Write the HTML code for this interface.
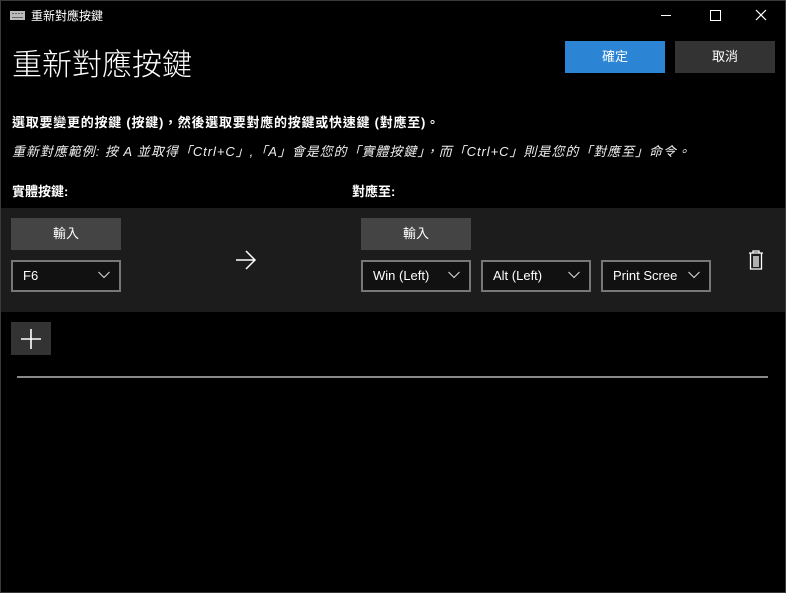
<!DOCTYPE html>
<html><head><meta charset="utf-8"><style>
body{margin:0;width:786px;height:593px;background:#000;color:#fff;font-family:"Liberation Sans","Noto Sans CJK TC",sans-serif;position:relative;overflow:hidden}
.a{position:absolute}
.frame{position:absolute;left:0;top:0;width:784px;height:591px;border:1px solid #3a3a3a}
.btn{position:absolute;background:#444;color:#fff;font-size:13px;text-align:center;line-height:32px;width:110px;height:32px}
.dd{position:absolute;width:106px;height:28px;border:2px solid #777;background:#111;font-size:13px;line-height:28px;box-sizing:content-box}
.dd span{position:absolute;left:10px}
.dd svg{position:absolute;right:9px;top:9px}
</style></head><body>
<div class="frame"></div>
<svg class="a" style="left:10px;top:11px" width="15" height="9"><rect x="0" y="0" width="15" height="9" fill="#bbb"/><g fill="#666"><rect x="2" y="2" width="2" height="1"/><rect x="5" y="2" width="2" height="1"/><rect x="8" y="2" width="2" height="1"/><rect x="11" y="2" width="2" height="1"/><rect x="2" y="6" width="11" height="1"/></g></svg>
<div class="a" style="left:31px;top:7px;font-size:12px">重新對應按鍵</div>
<div class="a" style="left:661px;top:15px;width:10px;height:1px;background:#fff"></div>
<div class="a" style="left:710px;top:10px;width:9px;height:9px;border:1px solid #fff"></div>
<svg class="a" style="left:755px;top:9px" width="12" height="12"><path d="M1 1L11 11M11 1L1 11" stroke="#fff" stroke-width="1.2"/></svg>
<div class="a" style="left:12px;top:40px;font-size:30px;font-weight:300">重新對應按鍵</div>
<div class="btn" style="left:565px;top:41px;width:100px;background:#2b84d4">確定</div>
<div class="btn" style="left:675px;top:41px;width:100px;background:#333">取消</div>
<div class="a" style="left:12px;top:112px;font-size:13px;font-weight:bold;letter-spacing:0.75px">選取要變更的按鍵 (按鍵)，然後選取要對應的按鍵或快速鍵 (對應至)。</div>
<div class="a" style="left:12px;top:141px;font-size:13px;font-style:italic;color:#eee;letter-spacing:0.95px">重新對應範例: 按 A 並取得「Ctrl+C」,「A」會是您的「實體按鍵」，而「Ctrl+C」則是您的「對應至」命令。</div>
<div class="a" style="left:12px;top:181px;font-size:13px;font-weight:bold">實體按鍵:</div>
<div class="a" style="left:352px;top:181px;font-size:13px;font-weight:bold">對應至:</div>
<div class="a" style="left:1px;top:208px;width:784px;height:104px;background:#1c1c1c"></div>
<div class="btn" style="left:11px;top:218px">輸入</div>
<div class="btn" style="left:361px;top:218px">輸入</div>
<div class="dd" style="left:11px;top:260px"><span>F6</span><svg width="12" height="8"><path d="M0.5 1L6 6.5L11.5 1" stroke="#ddd" fill="none"/></svg></div>
<div class="dd" style="left:361px;top:260px"><span>Win (Left)</span><svg width="12" height="8"><path d="M0.5 1L6 6.5L11.5 1" stroke="#ddd" fill="none"/></svg></div>
<div class="dd" style="left:481px;top:260px"><span>Alt (Left)</span><svg width="12" height="8"><path d="M0.5 1L6 6.5L11.5 1" stroke="#ddd" fill="none"/></svg></div>
<div class="dd" style="left:601px;top:260px"><span>Print Scree</span><svg width="12" height="8"><path d="M0.5 1L6 6.5L11.5 1" stroke="#ddd" fill="none"/></svg></div>
<svg class="a" style="left:235px;top:250px" width="22" height="20"><path d="M1 10H20M11 1L20 10L11 19" stroke="#fff" stroke-width="1.5" fill="none"/></svg>
<svg class="a" style="left:746px;top:249px" width="20" height="22"><path d="M3 4H17M7 4V2H13V4M4.5 4.5V20H15.5V4.5M8 7V18M10 7V18M12 7V18" stroke="#fff" stroke-width="1.3" fill="none"/></svg>
<div class="a" style="left:11px;top:322px;width:40px;height:33px;background:#333"></div>
<svg class="a" style="left:20px;top:328px" width="22" height="22"><path d="M11 1V21M1 11H21" stroke="#fff" stroke-width="1.6"/></svg>
<div class="a" style="left:17px;top:376px;width:751px;height:2px;background:#888"></div>
</body></html>
